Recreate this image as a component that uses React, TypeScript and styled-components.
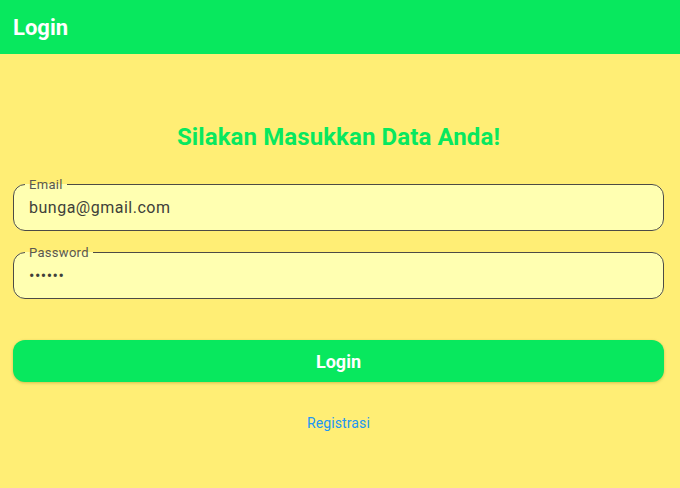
import * as React from 'react'
import styled, { createGlobalStyle } from 'styled-components'

const GlobalStyle = createGlobalStyle`
  html, body {
    margin: 0;
    padding: 0;
    background: #ffee75;
    font-family: Roboto, "Noto Sans", sans-serif;
  }
`

const Page = styled.div`
  width: 680px;
  height: 488px;
  background: #ffee75;
  display: flex;
  flex-direction: column;
`

const AppBar = styled.header`
  height: 54px;
  background: #08e85e;
  display: flex;
  align-items: center;
  padding: 0 13px;
  flex-shrink: 0;
`

const AppTitle = styled.h1`
  margin: 0;
  color: #fff;
  font-size: 22px;
  font-weight: 700;
`

const Body = styled.main`
  display: flex;
  flex-direction: column;
  padding: 69px 16px 0 13px;
`

const Heading = styled.h2`
  margin: 0 0 26px;
  text-align: center;
  color: #08e85e;
  font-size: 24px;
  line-height: 28px;
  font-weight: 700;
  letter-spacing: 0.1px;
`

const Field = styled.fieldset<{ $gap?: number }>`
  margin: 0 0 ${p => p.$gap ?? 0}px;
  padding: 0 0 7px;
  border: 1px solid #4d4b45;
  border-radius: 12px;
  background: #ffffb1;
  min-width: 0;
`

const Label = styled.legend`
  margin-left: 11px;
  padding: 0 4px;
  font-size: 13px;
  line-height: 15px;
  color: #5a5851;
  letter-spacing: 0.3px;
`

const Input = styled.input`
  display: block;
  box-sizing: border-box;
  width: 100%;
  height: 31px;
  padding: 0 15px;
  border: none;
  outline: none;
  background: transparent;
  font-family: Roboto, sans-serif;
  font-size: 16px;
  letter-spacing: 0.5px;
  color: #403f3a;
`

const Button = styled.button`
  height: 42px;
  border: none;
  border-radius: 12px;
  background: #08e85e;
  color: #fff;
  font-family: Roboto, sans-serif;
  font-size: 18px;
  font-weight: 700;
  box-shadow: 0 1px 3px rgba(120, 100, 0, 0.35);
  margin-bottom: 33px;
`

const Link = styled.a`
  align-self: center;
  color: #2196f3;
  font-size: 14px;
  line-height: 17px;
  letter-spacing: 0.1px;
  text-decoration: none;
`

export default function App() {
  return (
    <Page>
      <GlobalStyle />
      <AppBar>
        <AppTitle>Login</AppTitle>
      </AppBar>
      <Body>
        <Heading>Silakan Masukkan Data Anda!</Heading>
        <Field $gap={14}>
          <Label>Email</Label>
          <Input defaultValue="bunga@gmail.com" />
        </Field>
        <Field $gap={41}>
          <Label>Password</Label>
          <Input type="password" defaultValue="123456" />
        </Field>
        <Button>Login</Button>
        <Link href="#">Registrasi</Link>
      </Body>
    </Page>
  )
}
